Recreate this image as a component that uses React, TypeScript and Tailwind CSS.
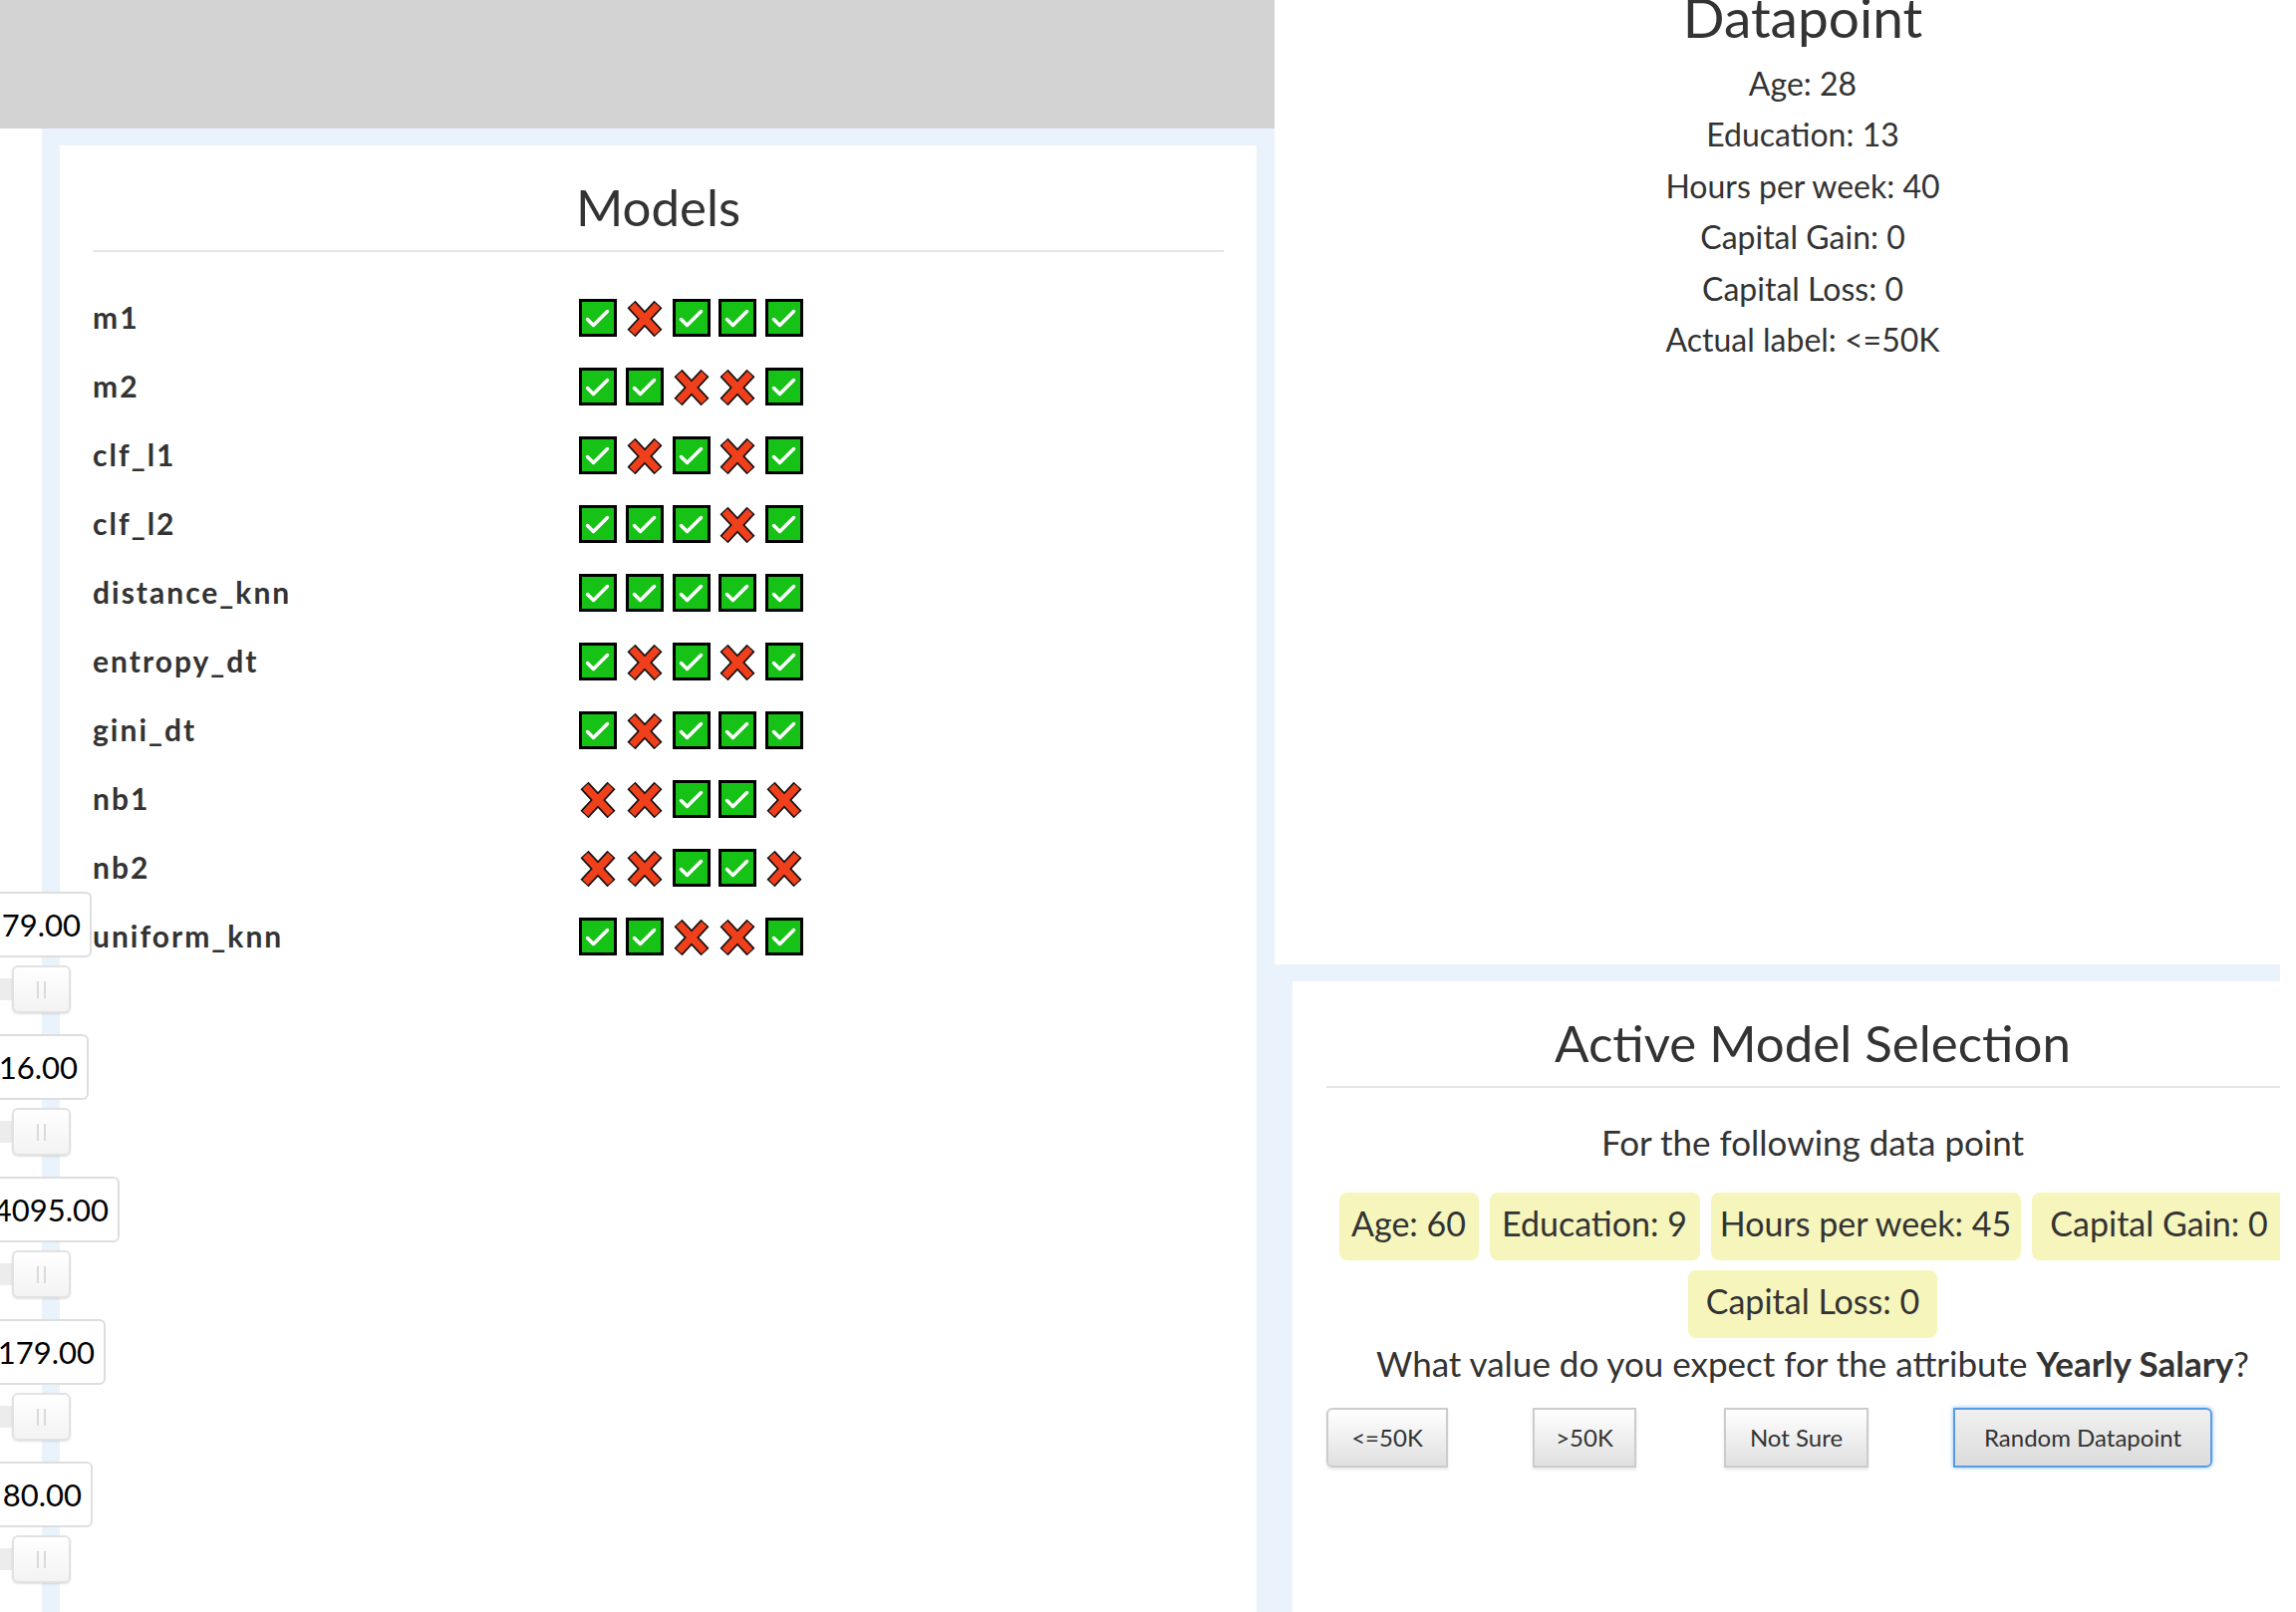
import React from "react";

type Row = { name: string; marks: boolean[] };

const rows: Row[] = [
  { name: "m1", marks: [true, false, true, true, true] },
  { name: "m2", marks: [true, true, false, false, true] },
  { name: "clf_l1", marks: [true, false, true, false, true] },
  { name: "clf_l2", marks: [true, true, true, false, true] },
  { name: "distance_knn", marks: [true, true, true, true, true] },
  { name: "entropy_dt", marks: [true, false, true, false, true] },
  { name: "gini_dt", marks: [true, false, true, true, true] },
  { name: "nb1", marks: [false, false, true, true, false] },
  { name: "nb2", marks: [false, false, true, true, false] },
  { name: "uniform_knn", marks: [true, true, false, false, true] },
];

const datapoint = [
  "Age: 28",
  "Education: 13",
  "Hours per week: 40",
  "Capital Gain: 0",
  "Capital Loss: 0",
  "Actual label: <=50K",
];

const badges = [
  { text: "Age: 60", w: "w-[140px]" },
  { text: "Education: 9", w: "w-[211px]" },
  { text: "Hours per week: 45", w: "w-[311px]" },
  { text: "Capital Gain: 0", w: "w-[256px]" },
  { text: "Capital Loss: 0", w: "w-[250px]" },
];

const sliders = [
  { value: "79.00", w: "w-[152px]" },
  { value: "16.00", w: "w-[149px]" },
  { value: "4095.00", w: "w-[180px]" },
  { value: "2179.00", w: "w-[166px]" },
  { value: "80.00", w: "w-[153px]" },
];

const Check = () => (
  <svg width="38" height="38" viewBox="0 0 38 38">
    <rect x="1.5" y="1.5" width="35" height="35" fill="#16c216" stroke="#000" strokeWidth="3" />
    <path
      d="M8.5 20.5 L14.5 26.5 L28.5 12.5"
      fill="none"
      stroke="#fff"
      strokeWidth="3.5"
      strokeLinecap="round"
      strokeLinejoin="round"
    />
  </svg>
);

const Cross = () => (
  <svg width="38" height="38" viewBox="0 0 38 38">
    <g strokeLinecap="butt">
      <line x1="5.5" y1="5.5" x2="32.5" y2="34.5" stroke="#111" strokeWidth="11" />
      <line x1="32.5" y1="5.5" x2="5.5" y2="34.5" stroke="#111" strokeWidth="11" />
      <line x1="6.3" y1="6.4" x2="31.7" y2="33.6" stroke="#f03f1b" strokeWidth="7.5" />
      <line x1="31.7" y1="6.4" x2="6.3" y2="33.6" stroke="#f03f1b" strokeWidth="7.5" />
    </g>
  </svg>
);

const CardTitle = ({ children }: { children: React.ReactNode }) => (
  <>
    <h2 className="pt-[31px] text-center text-[51px] leading-[62px] font-normal">{children}</h2>
    <div className="mt-[12px] h-[2px] bg-[#e5e5e5]" />
  </>
);

const btn = "h-[60px] border-2 border-[#cccccc] bg-gradient-to-b from-white to-[#e0e0e0] shadow-[0_2px_3px_rgba(0,0,0,0.1)]";

const SliderStack = () => (
  <div className="absolute left-0 top-[895px] z-10 flex flex-col gap-[21px]">
    {sliders.map((s) => (
      <div key={s.value} className="flex flex-col gap-[8px]">
        <div
          className={`-ml-[60px] flex h-[66px] items-center justify-end rounded-[6px] border-2 border-[#dedede] bg-white pr-[9px] text-[31px] text-black ${s.w}`}
        >
          {s.value}
        </div>
        <div className="flex h-[48px] items-center">
          <div className="h-[22px] w-[12px] bg-[#ececec]" />
          <div className="flex h-[48px] w-[59px] items-center justify-center gap-[5px] rounded-[6px] border-2 border-[#e2e2e2] bg-gradient-to-b from-white to-[#f3f3f3] shadow-[0_1px_2px_rgba(0,0,0,0.12)]">
            <div className="h-[17px] w-[2px] bg-[#dadada]" />
            <div className="h-[17px] w-[2px] bg-[#dadada]" />
          </div>
        </div>
      </div>
    ))}
  </div>
);

export default function App() {
  return (
    <div className="relative flex h-[1618px] w-[2288px] overflow-hidden bg-white font-[Lato,sans-serif] text-[#333]">
      <SliderStack />

      {/* left: models */}
      <div className="flex w-[1279px] shrink-0 flex-col">
        <div className="h-[129px] bg-[#d3d3d3]" />
        <div className="flex flex-1 flex-col pl-[42px]">
          <div className="flex flex-1 flex-col bg-[#eaf2fb] px-[18px] pt-[17px]">
            <div className="flex-1 bg-white px-[33px]">
              <CardTitle>Models</CardTitle>
              <div className="mt-[31px]">
                {rows.map((r) => (
                  <div key={r.name} className="flex h-[69px] items-center">
                    <div className="w-[488px] text-[30px] font-bold tracking-[2px]">{r.name}</div>
                    <div className="flex gap-[8.75px]">
                      {r.marks.map((ok, i) => (
                        <div key={i}>{ok ? <Check /> : <Cross />}</div>
                      ))}
                    </div>
                  </div>
                ))}
              </div>
            </div>
          </div>
        </div>
      </div>

      {/* right */}
      <div className="flex w-[1076px] shrink-0 flex-col">
        <div className="h-[968px] bg-white">
          <div className="w-[1060px] text-center">
            <h1 className="-mt-[12px] mb-[12px] text-[55px] leading-[58px] font-normal">Datapoint</h1>
            {datapoint.map((d) => (
              <div key={d} className="text-[32px] leading-[51.4px]">
                {d}
              </div>
            ))}
          </div>
        </div>
        <div className="flex flex-1 flex-col bg-[#eaf2fb] pl-[18px] pt-[17px]">
          <div className="w-[1044px] flex-1 bg-white px-[34px]">
            <CardTitle>Active Model Selection</CardTitle>
            <p className="mt-[29px] text-center text-[35px] leading-[50px]">For the following data point</p>
            <div className="mt-[26px] flex flex-wrap justify-center gap-x-[11px] gap-y-[10px]">
              {badges.map((b) => (
                <div
                  key={b.text}
                  className={`flex h-[68px] items-center justify-center rounded-[8px] bg-[#f5f5bc] pb-[10px] pt-[2px] text-[34px] ${b.w}`}
                >
                  {b.text}
                </div>
              ))}
            </div>
            <p className="text-center text-[35px] leading-[50px]">
              What value do you expect for the attribute <b>Yearly Salary</b>?
            </p>
            <div className="mt-[20px] flex pl-[-2px] text-[24px]">
              <button className={`w-[122px] rounded-l-[6px] ${btn}`}>&lt;=50K</button>
              <button className={`ml-[85px] w-[104px] ${btn}`}>&gt;50K</button>
              <button className={`ml-[88px] w-[145px] ${btn}`}>Not Sure</button>
              <button className="ml-[85px] h-[60px] w-[260px] rounded-r-[6px] border-2 border-[#5a9be8] bg-gradient-to-b from-[#f0f0f0] to-[#dcdcdc] shadow-[0_0_4px_rgba(102,175,233,0.8)]">
                Random Datapoint
              </button>
            </div>
          </div>
        </div>
      </div>
    </div>
  );
}
